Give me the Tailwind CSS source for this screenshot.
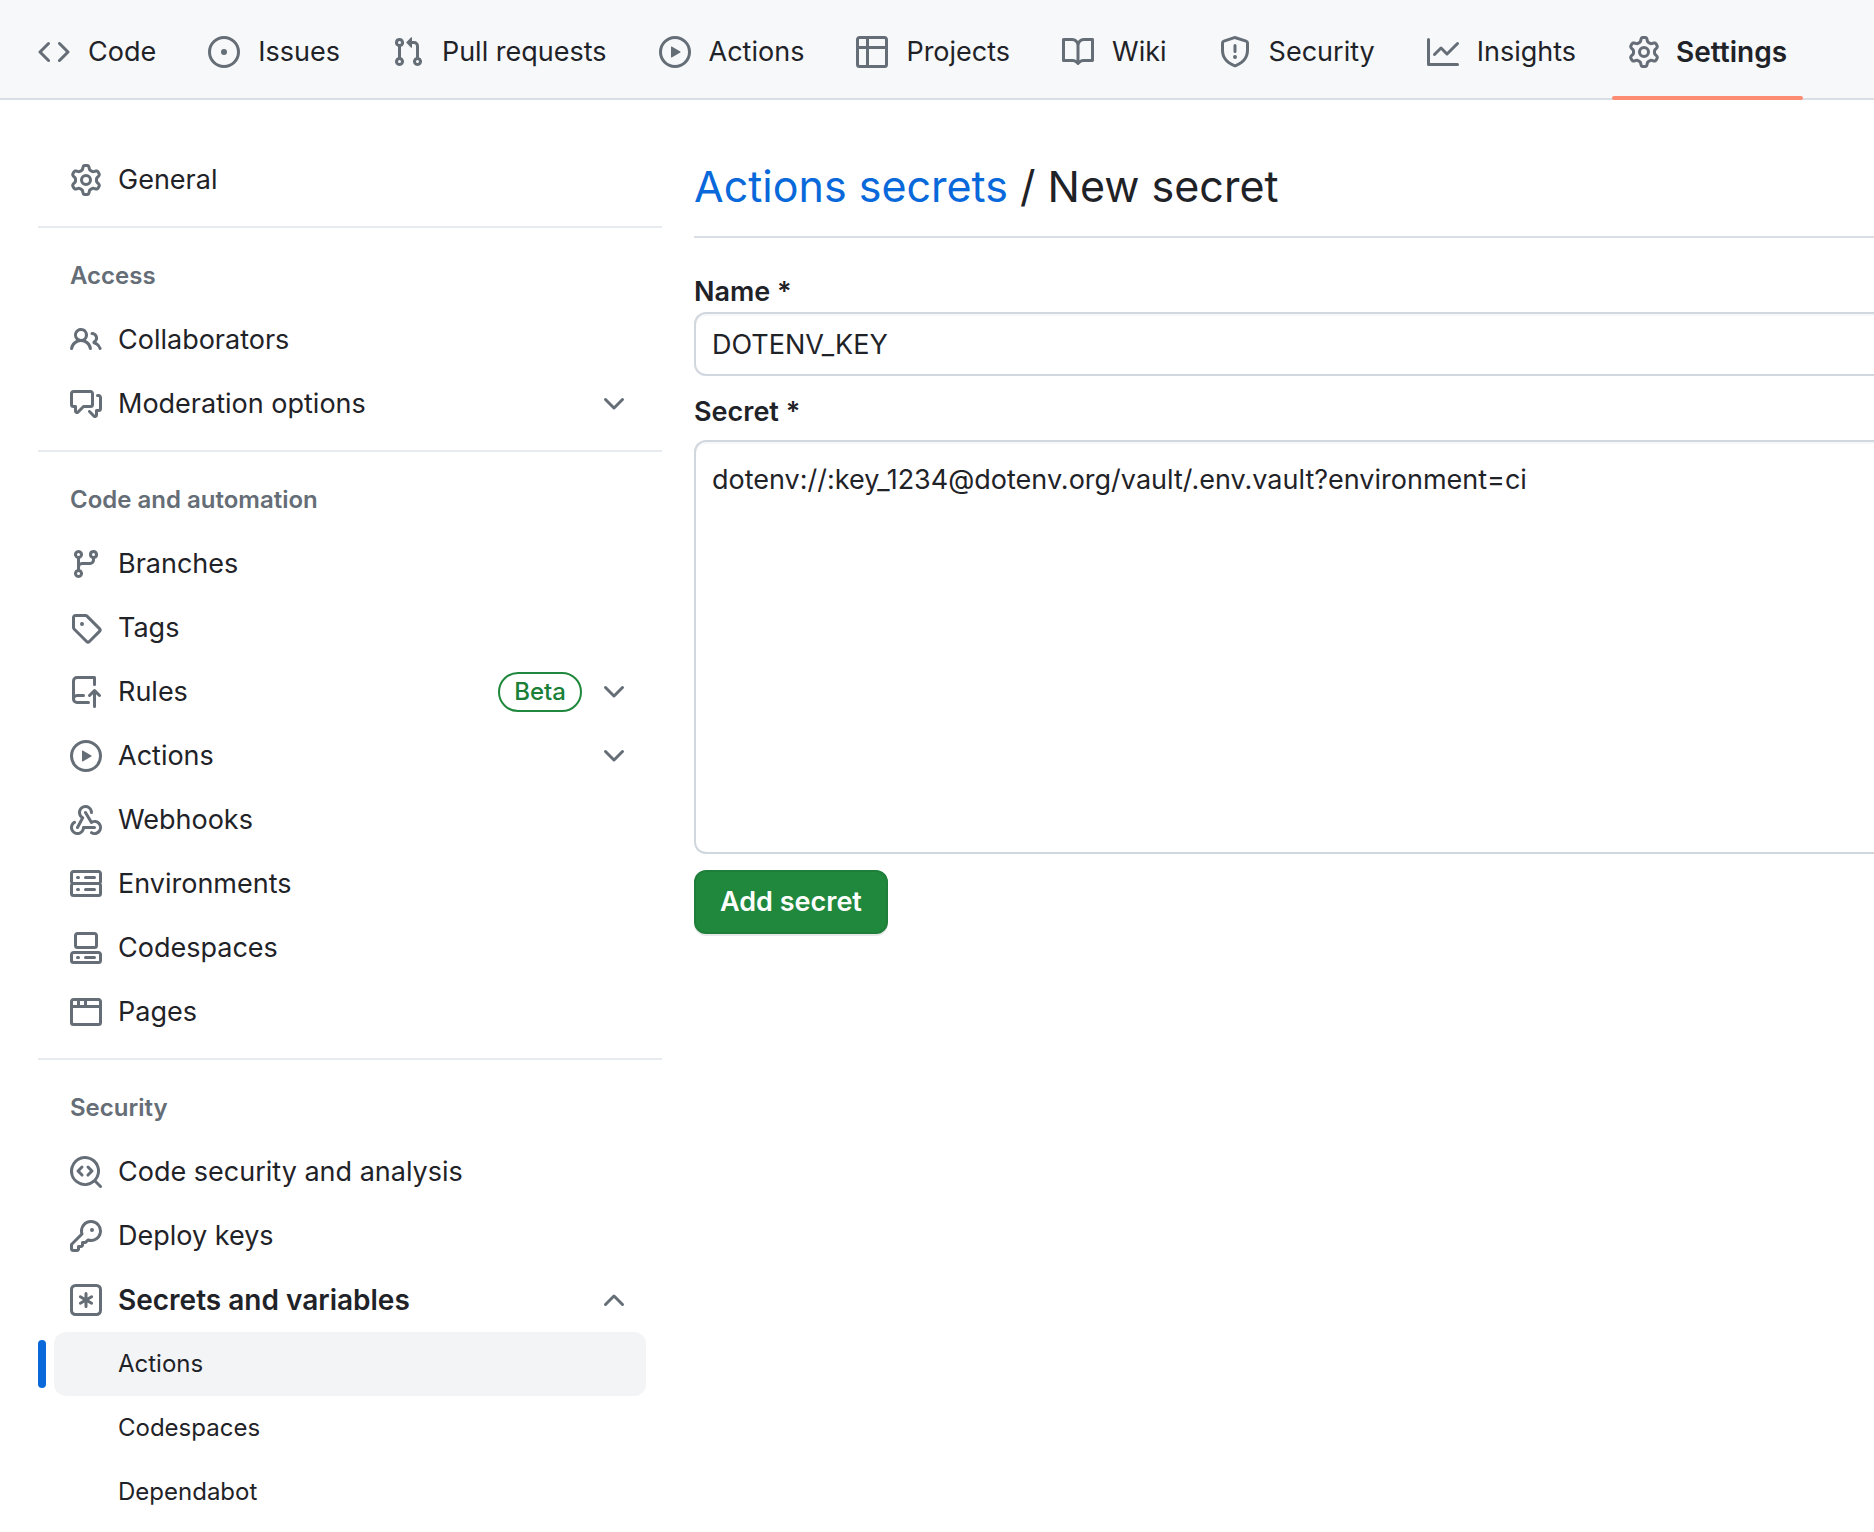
<!DOCTYPE html>
<html lang="en">
<head>
<meta charset="utf-8">
<meta name="viewport" content="width=device-width, initial-scale=1">
<title>Actions secrets / New secret</title>
<script src="https://cdn.jsdelivr.net/npm/@tailwindcss/browser@4"></script>
</head>
<body class="min-h-screen bg-white font-['Inter','Liberation_Sans',sans-serif] text-[27px] leading-10 text-[#1f2328]">

<!-- Icon set -->
<svg class="hidden" aria-hidden="true">
<symbol id="code" viewBox="0 0 16 16"><path d="m11.28 3.22 4.25 4.25a.75.75 0 0 1 0 1.06l-4.25 4.25a.749.749 0 0 1-1.275-.326.749.749 0 0 1 .215-.734L13.94 8l-3.72-3.72a.749.749 0 0 1 .326-1.275.749.749 0 0 1 .734.215Zm-6.56 0a.751.751 0 0 1 1.042.018.751.751 0 0 1 .018 1.042L2.06 8l3.72 3.72a.749.749 0 0 1-.326 1.275.749.749 0 0 1-.734-.215L.47 8.53a.75.75 0 0 1 0-1.06Z"/></symbol>
<symbol id="issue" viewBox="0 0 16 16"><path d="M8 9.5a1.5 1.5 0 1 0 0-3 1.5 1.5 0 0 0 0 3Z"/><path d="M8 0a8 8 0 1 1 0 16A8 8 0 0 1 8 0ZM1.5 8a6.5 6.5 0 1 0 13 0 6.5 6.5 0 0 0-13 0Z"/></symbol>
<symbol id="pull" viewBox="0 0 16 16"><path d="M1.5 3.25a2.25 2.25 0 1 1 3 2.122v5.256a2.251 2.251 0 1 1-1.5 0V5.372A2.25 2.25 0 0 1 1.5 3.25Zm5.677-.177L9.573.677A.25.25 0 0 1 10 .854V2.5h1A2.5 2.5 0 0 1 13.5 5v5.628a2.251 2.251 0 1 1-1.5 0V5a1 1 0 0 0-1-1h-1v1.646a.25.25 0 0 1-.427.177L7.177 3.427a.25.25 0 0 1 0-.354ZM3.75 2.5a.75.75 0 1 0 0 1.5.75.75 0 0 0 0-1.5Zm0 9.5a.75.75 0 1 0 0 1.5.75.75 0 0 0 0-1.5Zm8.25.75a.75.75 0 1 0 1.5 0 .75.75 0 0 0-1.5 0Z"/></symbol>
<symbol id="play" viewBox="0 0 16 16"><path d="M8 0a8 8 0 1 1 0 16A8 8 0 0 1 8 0ZM1.5 8a6.5 6.5 0 1 0 13 0 6.5 6.5 0 0 0-13 0Zm4.879-2.773 4.264 2.559a.25.25 0 0 1 0 .428l-4.264 2.559A.25.25 0 0 1 6 10.559V5.442a.25.25 0 0 1 .379-.215Z"/></symbol>
<symbol id="table" viewBox="0 0 16 16"><path d="M0 1.75C0 .784.784 0 1.75 0h12.5C15.216 0 16 .784 16 1.75v12.5A1.75 1.75 0 0 1 14.25 16H1.75A1.75 1.75 0 0 1 0 14.25ZM6.5 6.5v8h7.75a.25.25 0 0 0 .25-.25V6.5Zm8-1.5V1.75a.25.25 0 0 0-.25-.25H6.5V5Zm-13 1.5v7.75c0 .138.112.25.25.25H5v-8ZM5 5V1.5H1.75a.25.25 0 0 0-.25.25V5Z"/></symbol>
<symbol id="book" viewBox="0 0 16 16"><path d="M0 1.75A.75.75 0 0 1 .75 1h4.253c1.227 0 2.317.59 3 1.501A3.743 3.743 0 0 1 11.006 1h4.245a.75.75 0 0 1 .75.75v10.5a.75.75 0 0 1-.75.75h-4.507a2.25 2.25 0 0 0-1.591.659l-.622.621a.75.75 0 0 1-1.06 0l-.622-.621A2.25 2.25 0 0 0 5.258 13H.75a.75.75 0 0 1-.75-.75Zm7.251 10.324.004-5.073-.002-2.253A2.25 2.25 0 0 0 5.003 2.5H1.5v9h3.757a3.75 3.75 0 0 1 1.994.574ZM8.755 4.75l-.004 7.322a3.752 3.752 0 0 1 1.992-.572H14.5v-9h-3.495a2.25 2.25 0 0 0-2.25 2.25Z"/></symbol>
<symbol id="shield" viewBox="0 0 16 16"><path d="M7.467.133a1.748 1.748 0 0 1 1.066 0l5.25 1.68A1.75 1.75 0 0 1 15 3.48V7c0 1.566-.32 3.182-1.303 4.682-.983 1.498-2.585 2.813-5.032 3.855a1.697 1.697 0 0 1-1.33 0c-2.447-1.042-4.049-2.357-5.032-3.855C1.32 10.182 1 8.566 1 7V3.48a1.75 1.75 0 0 1 1.217-1.667Zm.61 1.429a.25.25 0 0 0-.153 0l-5.25 1.68a.25.25 0 0 0-.174.238V7c0 1.358.275 2.666 1.057 3.86.784 1.194 2.121 2.34 4.366 3.297a.196.196 0 0 0 .154 0c2.245-.956 3.582-2.104 4.366-3.298C13.225 9.666 13.5 8.36 13.5 7V3.48a.251.251 0 0 0-.174-.237l-5.25-1.68ZM8.75 4.75v3a.75.75 0 0 1-1.5 0v-3a.75.75 0 0 1 1.5 0ZM9 10.5a1 1 0 1 1-2 0 1 1 0 0 1 2 0Z"/></symbol>
<symbol id="graph" viewBox="0 0 16 16"><path d="M1.5 1.75V13.5h13.75a.75.75 0 0 1 0 1.5H.75a.75.75 0 0 1-.75-.75V1.75a.75.75 0 0 1 1.5 0Zm14.28 2.53-5.25 5.25a.75.75 0 0 1-1.06 0L7 7.06 4.28 9.78a.751.751 0 0 1-1.042-.018.751.751 0 0 1-.018-1.042l3.25-3.25a.75.75 0 0 1 1.06 0L10 7.94l4.72-4.72a.751.751 0 0 1 1.042.018.751.751 0 0 1 .018 1.042Z"/></symbol>
<symbol id="gear" viewBox="0 0 16 16"><path d="M8 0a8.2 8.2 0 0 1 .701.031C9.444.095 9.99.645 10.16 1.29l.288 1.107c.018.066.079.158.212.224.231.114.454.243.668.386.123.082.233.09.299.071l1.103-.303c.644-.176 1.392.021 1.82.63.27.385.506.792.704 1.218.315.675.111 1.422-.364 1.891l-.814.806c-.049.048-.098.147-.088.294.016.257.016.515 0 .772-.01.147.038.246.088.294l.814.806c.475.469.679 1.216.364 1.891a7.977 7.977 0 0 1-.704 1.217c-.428.61-1.176.807-1.82.63l-1.102-.302c-.067-.019-.177-.011-.3.071a5.909 5.909 0 0 1-.668.386c-.133.066-.194.158-.211.224l-.29 1.106c-.168.646-.715 1.196-1.458 1.26a8.006 8.006 0 0 1-1.402 0c-.743-.064-1.289-.614-1.458-1.26l-.289-1.106c-.018-.066-.079-.158-.212-.224a5.738 5.738 0 0 1-.668-.386c-.123-.082-.233-.09-.299-.071l-1.103.303c-.644.176-1.392-.021-1.82-.63a8.12 8.12 0 0 1-.704-1.218c-.315-.675-.111-1.422.363-1.891l.815-.806c.05-.048.098-.147.088-.294a6.214 6.214 0 0 1 0-.772c.01-.147-.038-.246-.088-.294l-.815-.806C.635 6.045.431 5.298.746 4.623a7.92 7.92 0 0 1 .704-1.217c.428-.61 1.176-.807 1.82-.63l1.102.302c.067.019.177.011.3-.071.214-.143.437-.272.668-.386.133-.066.194-.158.211-.224l.29-1.106C6.009.645 6.556.095 7.299.03 7.53.01 7.764 0 8 0Zm-.571 1.525c-.036.003-.108.036-.137.146l-.289 1.105c-.147.561-.549.967-.998 1.189-.173.086-.34.183-.5.29-.417.278-.97.423-1.529.27l-1.103-.303c-.109-.03-.175.016-.195.045-.22.312-.412.644-.573.99-.014.031-.021.11.059.19l.815.806c.411.406.562.957.53 1.456a4.709 4.709 0 0 0 0 .582c.032.499-.119 1.05-.53 1.456l-.815.806c-.081.08-.073.159-.059.19.162.346.353.677.573.989.02.03.085.076.195.046l1.102-.303c.56-.153 1.113-.008 1.53.27.161.107.328.204.501.29.447.222.85.629.997 1.189l.289 1.105c.029.109.101.143.137.146a6.6 6.6 0 0 0 1.142 0c.036-.003.108-.036.137-.146l.289-1.105c.147-.561.549-.967.998-1.189.173-.086.34-.183.5-.29.417-.278.97-.423 1.529-.27l1.103.303c.109.029.175-.016.195-.045.22-.313.411-.644.573-.99.014-.031.021-.11-.059-.19l-.815-.806c-.411-.406-.562-.957-.53-1.456a4.709 4.709 0 0 0 0-.582c-.032-.499.119-1.05.53-1.456l.815-.806c.081-.08.073-.159.059-.19a6.464 6.464 0 0 0-.573-.989c-.02-.03-.085-.076-.195-.046l-1.102.303c-.56.153-1.113.008-1.53-.27a4.44 4.44 0 0 0-.501-.29c-.447-.222-.85-.629-.997-1.189l-.289-1.105c-.029-.11-.101-.143-.137-.146a6.6 6.6 0 0 0-1.142 0ZM11 8a3 3 0 1 1-6 0 3 3 0 0 1 6 0ZM9.5 8a1.5 1.5 0 1 0-3.001.001A1.5 1.5 0 0 0 9.5 8Z"/></symbol>
<symbol id="people" viewBox="0 0 16 16"><path d="M2 5.5a3.5 3.5 0 1 1 5.898 2.549 5.508 5.508 0 0 1 3.034 4.084.75.75 0 1 1-1.482.235 4 4 0 0 0-7.9 0 .75.75 0 0 1-1.482-.236A5.507 5.507 0 0 1 3.102 8.05 3.493 3.493 0 0 1 2 5.5ZM11 4a3.001 3.001 0 0 1 2.22 5.018 5.01 5.01 0 0 1 2.56 3.012.749.749 0 0 1-.885.954.752.752 0 0 1-.549-.514 3.507 3.507 0 0 0-2.522-2.372.75.75 0 0 1-.574-.73v-.352a.75.75 0 0 1 .416-.672A1.5 1.5 0 0 0 11 5.5.75.75 0 0 1 11 4Zm-5.5-.5a2 2 0 1 0-.001 3.999A2 2 0 0 0 5.5 3.5Z"/></symbol>
<symbol id="comments" viewBox="0 0 16 16"><path d="M1.75 1h8.5c.966 0 1.75.784 1.75 1.75v5.5A1.75 1.75 0 0 1 10.25 10H7.061l-2.574 2.573A1.458 1.458 0 0 1 2 11.543V10h-.25A1.75 1.75 0 0 1 0 8.25v-5.5C0 1.784.784 1 1.75 1ZM1.5 2.75v5.5c0 .138.112.25.25.25h1a.75.75 0 0 1 .75.75v2.19l2.72-2.72a.749.749 0 0 1 .53-.22h3.5a.25.25 0 0 0 .25-.25v-5.5a.25.25 0 0 0-.25-.25h-8.5a.25.25 0 0 0-.25.25Zm13 2a.25.25 0 0 0-.25-.25h-.5a.75.75 0 0 1 0-1.5h.5c.966 0 1.75.784 1.75 1.75v5.5A1.75 1.75 0 0 1 14.25 12H14v1.543a1.458 1.458 0 0 1-2.487 1.03L9.22 12.28a.749.749 0 0 1 .326-1.275.749.749 0 0 1 .734.215l2.22 2.22v-2.19a.75.75 0 0 1 .75-.75h1a.25.25 0 0 0 .25-.25Z"/></symbol>
<symbol id="branch" viewBox="0 0 16 16"><path d="M9.5 3.25a2.25 2.25 0 1 1 3 2.122V6A2.5 2.5 0 0 1 10 8.5H6a1 1 0 0 0-1 1v1.128a2.251 2.251 0 1 1-1.5 0V5.372a2.25 2.25 0 1 1 1.5 0v1.836A2.493 2.493 0 0 1 6 7h4a1 1 0 0 0 1-1v-.628A2.25 2.25 0 0 1 9.5 3.25Zm-6 0a.75.75 0 1 0 1.5 0 .75.75 0 0 0-1.5 0Zm8.25-.75a.75.75 0 1 0 0 1.5.75.75 0 0 0 0-1.5ZM4.25 12a.75.75 0 1 0 0 1.5.75.75 0 0 0 0-1.5Z"/></symbol>
<symbol id="tag" viewBox="0 0 16 16"><path d="M1 7.775V2.75C1 1.784 1.784 1 2.75 1h5.025c.464 0 .91.184 1.238.513l6.25 6.25a1.75 1.75 0 0 1 0 2.474l-5.026 5.026a1.75 1.75 0 0 1-2.474 0l-6.25-6.25A1.752 1.752 0 0 1 1 7.775Zm1.5 0c0 .066.026.13.073.177l6.25 6.25a.25.25 0 0 0 .354 0l5.025-5.025a.25.25 0 0 0 0-.354l-6.25-6.25a.25.25 0 0 0-.177-.073H2.75a.25.25 0 0 0-.25.25ZM6 5a1 1 0 1 1 0 2 1 1 0 0 1 0-2Z"/></symbol>
<symbol id="push" viewBox="0 0 16 16"><path d="M1 2.5A2.5 2.5 0 0 1 3.5 0h8.75a.75.75 0 0 1 .75.75v3.5a.75.75 0 0 1-1.5 0V1.5h-8a1 1 0 0 0-1 1v6.708A2.493 2.493 0 0 1 3.5 9h3.25a.75.75 0 0 1 0 1.5H3.5a1 1 0 0 0 0 2h5.75a.75.75 0 0 1 0 1.5H3.5A2.5 2.5 0 0 1 1 11.5Zm13.23 7.79a.75.75 0 0 0 1.06-1.06l-2.505-2.505a.75.75 0 0 0-1.06 0L9.22 9.229a.75.75 0 0 0 1.061 1.06l1.225-1.224v6.184a.75.75 0 0 0 1.5 0V9.066l1.224 1.224Z"/></symbol>
<symbol id="webhook" viewBox="0 0 16 16"><path d="M5.5 4.25a2.25 2.25 0 0 1 4.5 0 .75.75 0 0 0 1.5 0 3.75 3.75 0 1 0-6.14 2.889l-2.272 4.258a.75.75 0 0 0 1.324.706L7 7.25a.75.75 0 0 0-.309-1.015A2.25 2.25 0 0 1 5.5 4.25Z"/><path d="M7.364 3.607a.75.75 0 0 1 1.03.257l2.608 4.349a3.75 3.75 0 1 1-.628 6.785.75.75 0 0 1 .752-1.299 2.25 2.25 0 1 0-.033-3.88.75.75 0 0 1-1.03-.256L7.107 4.636a.75.75 0 0 1 .257-1.03Z"/><path d="M2.9 8.776A.75.75 0 0 1 2.625 9.8 2.25 2.25 0 1 0 6 11.75a.75.75 0 0 1 .75-.751h5.5a.75.75 0 0 1 0 1.5H7.425a3.751 3.751 0 1 1-5.55-3.998.75.75 0 0 1 1.024.274Z"/></symbol>
<symbol id="server" viewBox="0 0 16 16"><path d="M1.75 1h12.5c.966 0 1.75.784 1.75 1.75v4c0 .372-.116.717-.314 1 .198.283.314.628.314 1v4a1.75 1.75 0 0 1-1.75 1.75H1.75A1.75 1.75 0 0 1 0 12.75v-4c0-.358.109-.707.314-1a1.739 1.739 0 0 1-.314-1v-4C0 1.784.784 1 1.75 1ZM1.5 2.75v4c0 .138.112.25.25.25h12.5a.25.25 0 0 0 .25-.25v-4a.25.25 0 0 0-.25-.25H1.75a.25.25 0 0 0-.25.25Zm.25 5.75a.25.25 0 0 0-.25.25v4c0 .138.112.25.25.25h12.5a.25.25 0 0 0 .25-.25v-4a.25.25 0 0 0-.25-.25ZM7 4.75A.75.75 0 0 1 7.75 4h4.5a.75.75 0 0 1 0 1.5h-4.5A.75.75 0 0 1 7 4.75ZM7.75 10h4.5a.75.75 0 0 1 0 1.5h-4.5a.75.75 0 0 1 0-1.5ZM3 4.75A.75.75 0 0 1 3.75 4h.5a.75.75 0 0 1 0 1.5h-.5A.75.75 0 0 1 3 4.75ZM3.75 10h.5a.75.75 0 0 1 0 1.5h-.5a.75.75 0 0 1 0-1.5Z"/></symbol>
<symbol id="codespaces" viewBox="0 0 16 16"><path d="M0 11.25c0-.966.784-1.75 1.75-1.75h12.5c.966 0 1.75.784 1.75 1.75v3A1.75 1.75 0 0 1 14.25 16H1.75A1.75 1.75 0 0 1 0 14.25Zm2-9.5C2 .784 2.784 0 3.75 0h8.5C13.216 0 14 .784 14 1.75v5a1.75 1.75 0 0 1-1.75 1.75h-8.5A1.75 1.75 0 0 1 2 6.75Zm1.75-.25a.25.25 0 0 0-.25.25v5c0 .138.112.25.25.25h8.5a.25.25 0 0 0 .25-.25v-5a.25.25 0 0 0-.25-.25Zm-2 9.5a.25.25 0 0 0-.25.25v3c0 .138.112.25.25.25h12.5a.25.25 0 0 0 .25-.25v-3a.25.25 0 0 0-.25-.25Z"/><path d="M7 12.75a.75.75 0 0 1 .75-.75h4.5a.75.75 0 0 1 0 1.5h-4.5a.75.75 0 0 1-.75-.75Zm-4 0a.75.75 0 0 1 .75-.75h.5a.75.75 0 0 1 0 1.5h-.5a.75.75 0 0 1-.75-.75Z"/></symbol>
<symbol id="browser" viewBox="0 0 16 16"><path d="M0 2.75C0 1.784.784 1 1.75 1h12.5c.966 0 1.75.784 1.75 1.75v10.5A1.75 1.75 0 0 1 14.25 15H1.75A1.75 1.75 0 0 1 0 13.25ZM14.5 6h-13v7.25c0 .138.112.25.25.25h12.5a.25.25 0 0 0 .25-.25Zm-6-3.5v2h6V2.75a.25.25 0 0 0-.25-.25ZM5 2.5v2h2v-2Zm-3.25 0a.25.25 0 0 0-.25.25V4.5h2v-2Z"/></symbol>
<symbol id="codescan" viewBox="0 0 16 16"><path d="M8.47 4.97a.75.75 0 0 0 0 1.06L9.94 7.5 8.47 8.97a.75.75 0 1 0 1.06 1.06l2-2a.75.75 0 0 0 0-1.06l-2-2a.75.75 0 0 0-1.06 0ZM6.53 6.03a.75.75 0 0 0-1.06-1.06l-2 2a.75.75 0 0 0 0 1.06l2 2a.75.75 0 1 0 1.06-1.06L5.06 7.5l1.47-1.47Z"/><path d="M12.246 13.307a7.501 7.501 0 1 1 1.06-1.06l2.474 2.473a.749.749 0 1 1-1.06 1.06l-2.474-2.473ZM1.5 7.5a6.002 6.002 0 0 0 3.608 5.504 6.002 6.002 0 0 0 6.486-1.117.748.748 0 0 1 .292-.293A6 6 0 1 0 1.5 7.5Z"/></symbol>
<symbol id="key" viewBox="0 0 16 16"><path d="M10.5 0a5.499 5.499 0 1 1-1.288 10.848l-.932.932a.749.749 0 0 1-.53.22H7v.75a.749.749 0 0 1-.22.53l-.5.5a.749.749 0 0 1-.53.22H5v.75a.749.749 0 0 1-.22.53l-.5.5a.749.749 0 0 1-.53.22h-2A1.75 1.75 0 0 1 0 14.25v-2c0-.199.079-.389.22-.53l4.932-4.932A5.5 5.5 0 0 1 10.5 0Zm-4 5.5c-.001.431.069.86.205 1.269a.75.75 0 0 1-.181.768L1.5 12.56v1.69c0 .138.112.25.25.25h1.69l.06-.06v-1.19a.75.75 0 0 1 .75-.75h1.19l.06-.06v-1.19a.75.75 0 0 1 .75-.75h1.19l1.023-1.025a.75.75 0 0 1 .768-.18A4 4 0 1 0 6.5 5.5ZM11 6a1 1 0 1 1 0-2 1 1 0 0 1 0 2Z"/></symbol>
<symbol id="asterisk" viewBox="0 0 16 16"><path d="M0 2.75A2.75 2.75 0 0 1 2.75 0h10.5A2.75 2.75 0 0 1 16 2.75v10.5A2.75 2.75 0 0 1 13.25 16H2.75A2.75 2.75 0 0 1 0 13.25ZM2.75 1.5c-.69 0-1.25.56-1.25 1.25v10.5c0 .69.56 1.25 1.25 1.25h10.5c.69 0 1.25-.56 1.25-1.25V2.75c0-.69-.56-1.25-1.25-1.25Z"/><path d="M8 4a.75.75 0 0 1 .75.75V6.7l1.69-.975a.75.75 0 0 1 .75 1.3L9.5 8l1.69.976a.75.75 0 0 1-.75 1.298L8.75 9.3v1.951a.75.75 0 0 1-1.5 0V9.299l-1.69.976a.75.75 0 0 1-.75-1.3L6.5 8l-1.69-.975a.75.75 0 0 1 .75-1.3l1.69.976V4.75A.75.75 0 0 1 8 4Z"/></symbol>
<symbol id="chevron" viewBox="0 0 16 16"><path d="M12.78 5.22a.749.749 0 0 1 0 1.06l-4.25 4.25a.749.749 0 0 1-1.06 0L3.22 6.28a.749.749 0 1 1 1.06-1.06L8 8.939l3.72-3.719a.749.749 0 0 1 1.06 0Z"/></symbol>
</svg>

<header class="border-b-2 border-[#d8dee4] bg-[#f6f8fa]">
  <nav aria-label="Repository" class="flex h-[98px] gap-5 whitespace-nowrap pl-[22px] pt-1.5">
    <a href="#" class="flex items-center gap-[18px] px-4"><svg class="size-8 fill-[#656d76]"><use href="#code"/></svg>Code</a>
    <a href="#" class="flex items-center gap-[18px] px-4"><svg class="size-8 fill-[#656d76]"><use href="#issue"/></svg>Issues</a>
    <a href="#" class="flex items-center gap-[18px] px-4"><svg class="size-8 fill-[#656d76]"><use href="#pull"/></svg>Pull requests</a>
    <a href="#" class="flex items-center gap-[18px] px-4"><svg class="size-8 fill-[#656d76]"><use href="#play"/></svg>Actions</a>
    <a href="#" class="flex items-center gap-[18px] px-4"><svg class="size-8 fill-[#656d76]"><use href="#table"/></svg>Projects</a>
    <a href="#" class="flex items-center gap-[18px] px-4"><svg class="size-8 fill-[#656d76]"><use href="#book"/></svg>Wiki</a>
    <a href="#" class="flex items-center gap-[18px] px-4"><svg class="size-8 fill-[#656d76]"><use href="#shield"/></svg>Security</a>
    <a href="#" class="flex items-center gap-[18px] px-4"><svg class="size-8 fill-[#656d76]"><use href="#graph"/></svg>Insights</a>
    <a href="#" aria-current="page" class="relative flex items-center gap-4 px-4 text-[28px] font-semibold"><svg class="size-8 fill-[#656d76]"><use href="#gear"/></svg>Settings<span class="absolute inset-x-0 -bottom-0.5 h-1 rounded-full bg-[#fd8c73]"></span></a>
  </nav>
</header>

<div class="flex gap-8 pl-[38px] pt-12">
  <nav aria-label="Settings" class="w-[624px] shrink-0 pb-2">
    <a href="#" class="flex h-16 items-center gap-4 px-8"><svg class="size-8 fill-[#656d76]"><use href="#gear"/></svg>General</a>

    <hr class="mt-3.5 mb-4 border-t-2 border-[#e7ebef]">
    <h2 class="flex h-16 items-center px-8 text-2xl font-semibold text-[#656d76]">Access</h2>
    <a href="#" class="flex h-16 items-center gap-4 px-8"><svg class="size-8 fill-[#656d76]"><use href="#people"/></svg>Collaborators</a>
    <button type="button" class="flex h-16 w-full items-center gap-4 px-8 text-left"><svg class="size-8 fill-[#656d76]"><use href="#comments"/></svg><span class="grow">Moderation options</span><svg class="size-8 fill-[#656d76]"><use href="#chevron"/></svg></button>

    <hr class="mt-3.5 mb-4 border-t-2 border-[#e7ebef]">
    <h2 class="flex h-16 items-center px-8 text-2xl font-semibold text-[#656d76]">Code and automation</h2>
    <a href="#" class="flex h-16 items-center gap-4 px-8"><svg class="size-8 fill-[#656d76]"><use href="#branch"/></svg>Branches</a>
    <a href="#" class="flex h-16 items-center gap-4 px-8"><svg class="size-8 fill-[#656d76]"><use href="#tag"/></svg>Tags</a>
    <button type="button" class="flex h-16 w-full items-center gap-4 px-8 text-left"><svg class="size-8 fill-[#656d76]"><use href="#push"/></svg><span class="grow">Rules</span><span class="flex h-10 items-center rounded-full border-2 border-[#1f883d] px-3.5 text-2xl font-medium text-[#1a7f37]">Beta</span><svg class="size-8 fill-[#656d76]"><use href="#chevron"/></svg></button>
    <button type="button" class="flex h-16 w-full items-center gap-4 px-8 text-left"><svg class="size-8 fill-[#656d76]"><use href="#play"/></svg><span class="grow">Actions</span><svg class="size-8 fill-[#656d76]"><use href="#chevron"/></svg></button>
    <a href="#" class="flex h-16 items-center gap-4 px-8"><svg class="size-8 fill-[#656d76]"><use href="#webhook"/></svg>Webhooks</a>
    <a href="#" class="flex h-16 items-center gap-4 px-8"><svg class="size-8 fill-[#656d76]"><use href="#server"/></svg>Environments</a>
    <a href="#" class="flex h-16 items-center gap-4 px-8"><svg class="size-8 fill-[#656d76]"><use href="#codespaces"/></svg>Codespaces</a>
    <a href="#" class="flex h-16 items-center gap-4 px-8"><svg class="size-8 fill-[#656d76]"><use href="#browser"/></svg>Pages</a>

    <hr class="mt-3.5 mb-4 border-t-2 border-[#e7ebef]">
    <h2 class="flex h-16 items-center px-8 text-2xl font-semibold text-[#656d76]">Security</h2>
    <a href="#" class="flex h-16 items-center gap-4 px-8"><svg class="size-8 fill-[#656d76]"><use href="#codescan"/></svg>Code security and analysis</a>
    <a href="#" class="flex h-16 items-center gap-4 px-8"><svg class="size-8 fill-[#656d76]"><use href="#key"/></svg>Deploy keys</a>
    <button type="button" aria-expanded="true" class="flex h-16 w-full items-center gap-4 px-8 text-left text-[28px] font-semibold"><svg class="size-8 fill-[#656d76]"><use href="#asterisk"/></svg><span class="grow">Secrets and variables</span><svg class="size-8 rotate-180 fill-[#656d76]"><use href="#chevron"/></svg></button>
    <div class="px-4 text-2xl">
      <a href="#" aria-current="page" class="relative flex h-16 items-center rounded-xl bg-[#f3f4f6] pl-16"><span class="absolute inset-y-2 -left-4 w-2 rounded-full bg-[#0969da]"></span>Actions</a>
      <a href="#" class="flex h-16 items-center pl-16">Codespaces</a>
      <a href="#" class="flex h-16 items-center pl-16">Dependabot</a>
    </div>
  </nav>

  <main class="min-w-0 grow">
    <h1 class="border-b-2 border-[#d8dee4] pt-2 pb-5 text-[43px] leading-[60px]"><a href="#" class="text-[#0969da]">Actions secrets</a> / New secret</h1>
    <form class="pt-[34px]">
      <label for="secret-name" class="block font-semibold">Name *</label>
      <input id="secret-name" type="text" value="DOTENV_KEY" class="block h-16 w-full rounded-l-xl border-2 border-r-0 border-[#d0d7de] px-4 shadow-[inset_0_2px_0_rgba(208,215,222,0.2)] outline-none">
      <label for="secret-value" class="mt-4 mb-2 block font-semibold">Secret *</label>
      <textarea id="secret-value" class="block h-[414px] w-full resize-none rounded-l-xl border-2 border-r-0 border-[#d0d7de] px-4 py-[18px] shadow-[inset_0_2px_0_rgba(208,215,222,0.2)] outline-none">dotenv://:key_1234@dotenv.org/vault/.env.vault?environment=ci</textarea>
      <button type="submit" class="mt-4 flex h-16 items-center rounded-xl border-2 border-[#1f7f3a] bg-[#1f883d] px-6 font-semibold text-white shadow-[0_2px_0_rgba(31,35,40,0.1)]">Add secret</button>
    </form>
  </main>
</div>
</body>
</html>
